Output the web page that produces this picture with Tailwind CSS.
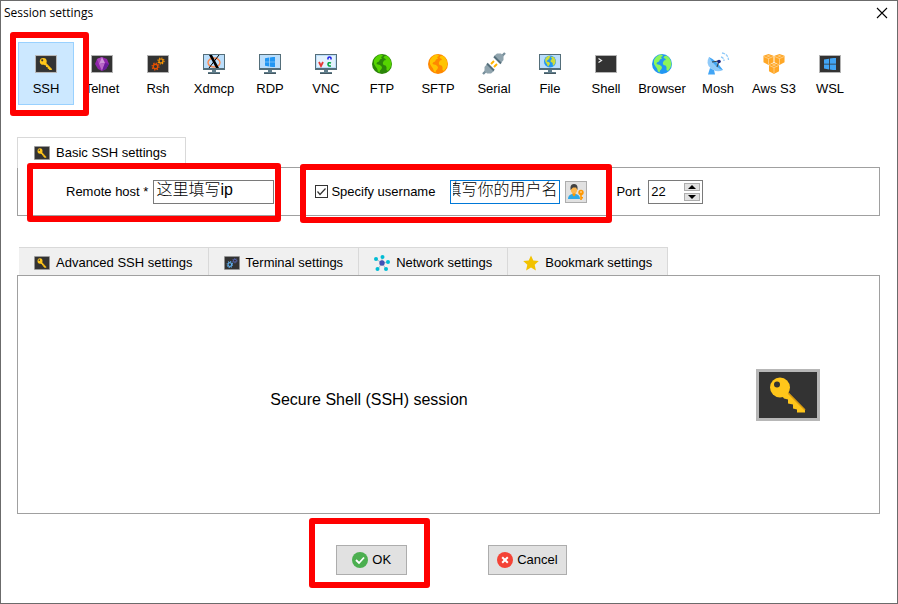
<!DOCTYPE html>
<html lang="en">
<head>
    <meta charset="UTF-8">
    <meta name="viewport" content="width=device-width, initial-scale=1.0">
    <title>Session settings</title>
    <script src="https://cdn.jsdelivr.net/npm/@tailwindcss/browser@4"></script>
</head>
<body class="bg-white text-black text-[13px] leading-4 font-['Liberation_Sans','Noto_Sans_CJK_SC',sans-serif]">

    <!-- Shared icon parts -->
    <svg class="hidden" aria-hidden="true">
        <symbol id="tile" viewBox="0 0 22 18">
            <rect width="22" height="18" fill="#b4b4b4"/>
            <rect x="1" y="1" width="20" height="16" fill="#333"/>
        </symbol>
        <symbol id="key" viewBox="0 0 64 52">
            <rect width="64" height="52" fill="#b7b7b7"/>
            <rect x="3" y="3" width="58" height="46" fill="#333"/>
            <path d="M31 22l18 18.500v3h-8v-3l-4-1v-4l-5-1v-4l-4-1-3-4z" fill="#ffc61a"/>
            <path d="M32 24l17 17" stroke="#d99a10" stroke-width="1.500"/>
            <circle cx="24" cy="18.500" r="10" fill="#ffc61a"/>
            <circle cx="21" cy="15.500" r="3" fill="#333"/>
        </symbol>
        <symbol id="monitor" viewBox="0 0 22 20">
            <rect width="22" height="16" fill="#546e7a"/>
            <rect x="1" y="1" width="20" height="13" fill="#bbdefb"/>
            <path d="M9 16h4v2h4v2H5v-2h4z" fill="#607d8b"/>
            <path d="M5 19h12v1H5z" fill="#455a64"/>
        </symbol>
        <symbol id="land" viewBox="0 0 20 20">
            <path d="M2 6l2-3 3-2 3-.5 1 1.500-2 1 1 1.500-2 1-1 2-2 1-.5 1.500 1.500.5 2 .5 2 2-.5 2-1.500 1.500-.5 2-1.500-1-1-3-1.500-2L2 10z" fill="currentColor"/>
            <path d="M14 1.500l2.500 1.500 2 3 1 4-1 3.500-2.500 3.500-1.500-1v-3l-1-1.500-2-.5-.8-2 1.300-2.500 2-.5-1-1.500-1.500-.5.5-1.500z" fill="currentColor"/>
        </symbol>
        <symbol id="gear" viewBox="0 0 12 12">
            <circle cx="6" cy="6" r="3" fill="none" stroke="currentColor" stroke-width="1.800"/>
            <circle cx="6" cy="6" r="4.600" fill="none" stroke="currentColor" stroke-width="1.600" stroke-dasharray="1.800 1.812"/>
        </symbol>
        <symbol id="windows" viewBox="0 0 12 12">
            <path d="M0 1.500l5-.8v5H0zM5.800.5L12-.3v6H5.800zM0 6.400h5v5L0 10.600zM5.800 6.400H12v6l-6.200-.8z" fill="currentColor"/>
        </symbol>
        <symbol id="cube" viewBox="0 0 12 12">
            <path d="M6 0l5.500 2v7L6 12 .5 9V2z" fill="#ffa726"/>
            <path d="M6 1.200l2.500 1L6 3.200l-2.500-1z" fill="#ffcc80"/>
            <path d="M1 2.800L6 5l5-2.200M6 5v6.500" stroke="#ffe0b2" stroke-width=".7" fill="none"/>
        </symbol>
    </svg>

    <div class="min-h-screen flex flex-col border border-[#6b6b6b]">

        <header class="h-6 flex items-center justify-between pl-[3px] pr-[9px]">
            <h1 class="text-xs font-['Open_Sans',sans-serif]">Session settings</h1>
            <button type="button" aria-label="Close">
                <svg class="w-3 h-3" viewBox="0 0 12 12" fill="none" stroke="#000" stroke-width="1.100"><path d="M1 1l10 10M11 1L1 11"/></svg>
            </button>
        </header>

        <main class="flex-1 flex flex-col pl-4 pr-[17px] pb-7">

            <!-- Session types -->
            <nav class="mt-[17px] pl-px flex">
                <div class="relative">
                    <button type="button" class="w-14 h-[63px] pt-1 flex flex-col items-center justify-center gap-2 bg-[#cce8ff] border border-[#99d1ff]">
                        <svg class="w-[22px] h-[18px]" viewBox="0 0 64 52" preserveAspectRatio="none"><use href="#key" width="64" height="52"/></svg>
                        SSH
                    </button>
                    <span class="absolute z-10 -left-2 -right-[15px] -top-[10px] -bottom-[11px] border-6 border-[#ff0000] rounded-[3px] pointer-events-none"></span>
                </div>
                <button type="button" class="w-14 h-[63px] pt-1 flex flex-col items-center justify-center gap-[7px]">
                    <svg class="w-[22px] h-5" viewBox="0 -1 22 20">
                        <use href="#tile" width="22" height="18"/>
                        <path d="M11 2l5 2 2 5-3 5-4 2-4-2-3-5 2-5z" fill="#8e24aa"/>
                        <path d="M11 2L6 4l2 5z" fill="#ab47bc"/>
                        <path d="M11 2L8 9l6-1z" fill="#ce93d8"/>
                        <path d="M8 9l6-1-3 8z" fill="#ba68c8"/>
                        <path d="M18 9l-4-1-3 8 4-2z" fill="#6a1b9a"/>
                    </svg>
                    Telnet
                </button>
                <button type="button" class="w-14 h-[63px] pt-1 flex flex-col items-center justify-center gap-[7px]">
                    <svg class="w-[22px] h-5" viewBox="0 -1 22 20">
                        <use href="#tile" width="22" height="18"/>
                        <use href="#gear" x="4" y="7" width="9" height="9" class="text-[#e65100]"/>
                        <use href="#gear" x="10" y="2" width="8" height="8" class="text-[#ff9800]"/>
                    </svg>
                    Rsh
                </button>
                <button type="button" class="w-14 h-[63px] pt-1 flex flex-col items-center justify-center gap-[7px]">
                    <svg class="w-[22px] h-5" viewBox="0 0 22 20">
                        <use href="#monitor" width="22" height="20"/>
                        <ellipse cx="11" cy="8.500" rx="6" ry="4.500" fill="none" stroke="#ff8a50" stroke-width="1.400"/>
                        <path d="M6 1h3l7 13h-3z" fill="#000"/>
                        <path d="M16 1L6 14" stroke="#000" stroke-width="1"/>
                    </svg>
                    Xdmcp
                </button>
                <button type="button" class="w-14 h-[63px] pt-1 flex flex-col items-center justify-center gap-[7px]">
                    <svg class="w-[22px] h-5" viewBox="0 0 22 20">
                        <use href="#monitor" width="22" height="20"/>
                        <use href="#windows" x="6" y="3" width="10" height="10" class="text-[#2196f3]"/>
                    </svg>
                    RDP
                </button>
                <button type="button" class="w-14 h-[63px] pt-1 flex flex-col items-center justify-center gap-[7px]">
                    <svg class="w-[22px] h-5" viewBox="0 0 22 20">
                        <use href="#monitor" width="22" height="20"/>
                        <rect x="2" y="2" width="18" height="11" fill="#e3f2fd"/>
                        <path d="M4 8l2 4 2-4" fill="none" stroke="#e53935" stroke-width="1.800"/>
                        <path d="M13 5.500V4q0-1 1.500-1T16 4v1.500" fill="none" stroke="#1a1ae6" stroke-width="1.500"/>
                        <path d="M16 9q-3-1-3 1.200T16 12" fill="none" stroke="#00a63c" stroke-width="1.600"/>
                    </svg>
                    VNC
                </button>
                <button type="button" class="w-14 h-[63px] pt-1 flex flex-col items-center justify-center gap-[7px]">
                    <svg class="w-5 h-5" viewBox="0 0 20 20">
                        <circle cx="10" cy="10" r="10" fill="#2b8509"/>
                        <use href="#land" width="20" height="20" class="text-[#55d400]"/>
                    </svg>
                    FTP
                </button>
                <button type="button" class="w-14 h-[63px] pt-1 flex flex-col items-center justify-center gap-[7px]">
                    <svg class="w-5 h-5" viewBox="0 0 20 20">
                        <circle cx="10" cy="10" r="10" fill="#ff8800"/>
                        <use href="#land" width="20" height="20" class="text-[#ffc400]"/>
                    </svg>
                    SFTP
                </button>
                <button type="button" class="w-14 h-[63px] pt-1 flex flex-col items-center justify-center gap-[7px]">
                    <svg class="w-[22px] h-5 overflow-visible" viewBox="0 0 22 20">
                        <path d="M0 20l3-3M22-1l-3 3" stroke="#78909c" stroke-width="2.400"/>
                        <path d="M8 10l3-3M11 13l3-3" stroke="#ffb300" stroke-width="2"/>
                        <path d="M4 10l7 7-3 2.500H4L1.500 17v-4z" fill="#90a4ae"/>
                        <path d="M11 2l7 7 2.500-3V2L18-.5h-4z" fill="#90a4ae"/>
                        <path d="M4 9.500l7 7M11 2.500l7 7" stroke="#546e7a" stroke-width="2"/>
                    </svg>
                    Serial
                </button>
                <button type="button" class="w-14 h-[63px] pt-1 flex flex-col items-center justify-center gap-[7px]">
                    <svg class="w-[22px] h-5" viewBox="0 0 22 20">
                        <use href="#monitor" width="22" height="20"/>
                        <circle cx="11" cy="7.500" r="6" fill="#2196f3"/>
                        <use href="#land" x="5" y="1.500" width="12" height="12" class="text-[#cddc39]"/>
                    </svg>
                    File
                </button>
                <button type="button" class="w-14 h-[63px] pt-1 flex flex-col items-center justify-center gap-[7px]">
                    <svg class="w-[22px] h-5" viewBox="0 -1 22 20">
                        <use href="#tile" width="22" height="18"/>
                        <path d="M3.500 3.500l3 2-3 2" fill="none" stroke="#eee" stroke-width="1.200"/>
                    </svg>
                    Shell
                </button>
                <button type="button" class="w-14 h-[63px] pt-1 flex flex-col items-center justify-center gap-[7px]">
                    <svg class="w-5 h-5" viewBox="0 0 20 20">
                        <circle cx="10" cy="10" r="10" fill="#2196f3"/>
                        <use href="#land" width="20" height="20" class="text-[#8cf55a]"/>
                    </svg>
                    Browser
                </button>
                <button type="button" class="w-14 h-[63px] pt-1 flex flex-col items-center justify-center gap-[7px]">
                    <svg class="w-[22px] h-5 overflow-visible" viewBox="0 0 22 20">
                        <path d="M3 14l4 2 1 4.500H1z" fill="#42a5f5"/>
                        <path d="M2 3Q-2 10 4 14.500T16 16z" fill="#90caf9"/>
                        <path d="M2 3q7 3 14 13-3-.5-7-4T2 3z" fill="#42a5f5"/>
                        <path d="M5 8l7-1-2 6" fill="none" stroke="#37474f" stroke-width="1.100"/>
                        <circle cx="12" cy="7.500" r="1.800" fill="#1a237e"/>
                        <path d="M14 3q3 .5 3 4M15-1q6 1 6.500 7" fill="none" stroke="#90caf9" stroke-width="1.300" stroke-dasharray="3 1"/>
                    </svg>
                    Mosh
                </button>
                <button type="button" class="w-14 h-[63px] pt-1 flex flex-col items-center justify-center gap-[7px]">
                    <svg class="w-[22px] h-5" viewBox="0 0 22 20">
                        <use href="#cube" width="11" height="11"/>
                        <use href="#cube" x="11" width="11" height="11"/>
                        <use href="#cube" x="5.500" y="9" width="11" height="11"/>
                    </svg>
                    <span class="whitespace-nowrap">Aws S3</span>
                </button>
                <button type="button" class="w-14 h-[63px] pt-1 flex flex-col items-center justify-center gap-[7px]">
                    <svg class="w-[22px] h-5" viewBox="0 -1 22 20">
                        <use href="#tile" width="22" height="18"/>
                        <use href="#windows" x="5" y="3" width="12" height="12" class="text-[#42a5f5]"/>
                    </svg>
                    WSL
                </button>
            </nav>

            <!-- Basic settings -->
            <div class="mt-8 flex" role="tablist">
                <button type="button" role="tab" aria-selected="true" class="relative h-[31px] -mb-px pl-4 pr-[18px] flex items-center gap-1.5 bg-white border border-b-0 border-[#d9d9d9]">
                    <svg class="w-4 h-[14px]" viewBox="0 0 64 52" preserveAspectRatio="none"><use href="#key" width="64" height="52"/></svg>
                    Basic SSH settings
                </button>
            </div>
            <form class="h-[49px] pl-12 flex items-center border border-[#a0a0a0]">
                <div class="relative flex items-center gap-[5px]">
                    <label for="host" class="whitespace-nowrap">Remote host *</label>
                    <input id="host" type="text" value="这里填写ip" class="w-[121px] h-6 px-0.5 pb-1 text-base font-light border border-[#7a7a7a] outline-none">
                    <span class="absolute z-10 -left-[39px] -right-[7px] -top-[17px] -bottom-[18px] border-6 border-[#ff0000] rounded-[3px] pointer-events-none"></span>
                </div>
                <div class="relative ml-[41px] flex items-center">
                    <span class="grid">
                        <input id="specify" type="checkbox" checked class="peer col-start-1 row-start-1 w-[13px] h-[13px] appearance-none border border-[#333] bg-white">
                        <svg class="col-start-1 row-start-1 w-[13px] h-[13px] invisible peer-checked:visible pointer-events-none" viewBox="0 0 13 13" fill="none" stroke="#333" stroke-width="1.200"><path d="M2.500 6.500L5 9.500l5.500-6"/></svg>
                    </span>
                    <label for="specify" class="ml-[3px] whitespace-nowrap">Specify username</label>
                    <!-- rtl keeps the end of a long name in view -->
                    <input id="username" type="text" dir="rtl" aria-label="Username" value="这里填写你的用户名" class="ml-[15px] w-[110px] h-6 px-0.5 pb-1 text-base font-light border border-[#0078d7] outline-none">
                    <button type="button" aria-label="Choose user" class="ml-[5px] w-[22px] h-[22px] flex items-center justify-center bg-[#e1e1e1] border border-[#adadad]">
                        <svg class="w-4 h-4" viewBox="0 0 16 16">
                            <path d="M0 15q0-4 4-5h4q4 1 4 5z" fill="#2fa8e6"/>
                            <path d="M4.500 9h3v2L6 12.500 4.500 11z" fill="#ff9800"/>
                            <ellipse cx="6" cy="5.500" rx="3.200" ry="4" fill="#ffb74d"/>
                            <path d="M2.500 6V3Q3 0 6 0t3.500 3v3L8 3.500H5z" fill="#424242"/>
                            <circle cx="13" cy="8.500" r="2.700" fill="#ff9800"/>
                            <path d="M12.200 10h1.600v6h-1.600zM13.500 13h1.500v1.500h-1.500z" fill="#ff9800"/>
                            <circle cx="13" cy="8" r=".7" fill="#fff"/>
                        </svg>
                    </button>
                    <span class="absolute z-10 -left-[15px] -right-[25px] -top-4 -bottom-[19px] border-6 border-[#ff0000] rounded-[3px] pointer-events-none"></span>
                </div>
                <label for="port" class="ml-[29px]">Port</label>
                <div class="ml-2 w-[55px] h-6 pl-0.5 pr-0.5 flex items-center border border-[#7a7a7a]">
                    <input id="port" type="number" value="22" class="min-w-0 flex-1 outline-none [appearance:textfield] [&::-webkit-inner-spin-button]:appearance-none">
                    <div class="flex flex-col gap-0.5">
                        <button type="button" aria-label="Increase port" data-step="1" class="w-4 h-2 flex items-center justify-center bg-[#e1e1e1] border border-[#adadad]">
                            <svg class="w-2 h-1" viewBox="0 0 8 4"><path d="M0 4l4-4 4 4z"/></svg>
                        </button>
                        <button type="button" aria-label="Decrease port" data-step="-1" class="w-4 h-2 flex items-center justify-center bg-[#e1e1e1] border border-[#adadad]">
                            <svg class="w-2 h-1" viewBox="0 0 8 4"><path d="M0 0l4 4 4-4z"/></svg>
                        </button>
                    </div>
                </div>
            </form>

            <!-- Other settings -->
            <div class="mt-[31px] pl-0.5 flex" role="tablist">
                <button type="button" role="tab" class="h-7 pt-0.5 px-[15px] flex items-center gap-1.5 bg-[#f0f0f0] border-t border-r border-[#d9d9d9]">
                    <svg class="w-4 h-[14px]" viewBox="0 0 64 52" preserveAspectRatio="none"><use href="#key" width="64" height="52"/></svg>
                    Advanced SSH settings
                </button>
                <button type="button" role="tab" class="h-7 pt-0.5 px-[15px] flex items-center gap-1.5 bg-[#f0f0f0] border-t border-r border-[#d9d9d9]">
                    <svg class="w-4 h-[14px]" viewBox="0 0 22 18" preserveAspectRatio="none">
                        <use href="#tile" width="22" height="18"/>
                        <use href="#gear" x="3" y="6" width="10" height="10" class="text-[#64b5f6]"/>
                        <use href="#gear" x="11" y="2" width="8" height="8" class="text-[#5c6bc0]"/>
                    </svg>
                    Terminal settings
                </button>
                <button type="button" role="tab" class="h-7 pt-0.5 px-[15px] flex items-center gap-1.5 bg-[#f0f0f0] border-t border-r border-[#d9d9d9]">
                    <svg class="w-4 h-4" viewBox="0 0 16 16">
                        <path d="M8 8L2 4M8 8l0-6M8 8l6-1M8 8l4 6M8 8l-4 6" stroke="#b0bec5" stroke-width="1"/>
                        <circle cx="8" cy="8" r="2.700" fill="#3f51b5"/>
                        <g fill="#00bcd4">
                            <circle cx="2" cy="4" r="2"/><circle cx="8.500" cy="2" r="2"/><circle cx="14" cy="7" r="2"/><circle cx="12" cy="14" r="2"/><circle cx="3.500" cy="14" r="2"/>
                        </g>
                    </svg>
                    Network settings
                </button>
                <button type="button" role="tab" class="h-7 pt-0.5 px-[15px] flex items-center gap-1.5 bg-[#f0f0f0] border-t border-r border-[#d9d9d9]">
                    <svg class="w-4 h-4" viewBox="0 0 16 16"><path d="M8 .5l2.300 5 5.500.6-4.100 3.700 1.200 5.700L8 12.600l-4.900 2.900 1.200-5.700L.2 6.100l5.500-.6z" fill="#f2c200"/></svg>
                    Bookmark settings
                </button>
            </div>
            <section class="flex-1 flex items-center pr-[23px] border border-[#a0a0a0]">
                <p class="flex-1 pt-2.5 text-center text-base">Secure Shell (SSH) session</p>
                <div class="w-[136px] flex justify-center">
                    <svg class="w-16 h-[52px]" viewBox="0 0 64 52"><use href="#key" width="64" height="52"/></svg>
                </div>
            </section>

            <footer class="mt-[31px] pl-1.5 flex justify-center gap-[81px]">
                <div class="relative">
                    <button type="button" class="h-[30px] px-[15px] flex items-center gap-1 bg-[#e1e1e1] border border-[#adadad]">
                        <svg class="w-4 h-4" viewBox="0 0 16 16"><circle cx="8" cy="8" r="8" fill="#4caf50"/><path d="M4 8l3 3 5-5.500" fill="none" stroke="#fff" stroke-width="1.800"/></svg>
                        OK
                    </button>
                    <span class="absolute z-10 -left-[27px] -right-[23px] -top-[27px] -bottom-[13px] border-6 border-[#ff0000] rounded-[3px] pointer-events-none"></span>
                </div>
                <button type="button" class="h-[30px] px-2 flex items-center gap-1 bg-[#e1e1e1] border border-[#adadad]">
                    <svg class="w-4 h-4" viewBox="0 0 16 16"><circle cx="8" cy="8" r="8" fill="#f44336"/><path d="M5.200 5.200l5.600 5.600M10.800 5.200l-5.600 5.600" stroke="#fff" stroke-width="2"/></svg>
                    Cancel
                </button>
            </footer>
        </main>
    </div>

    <script>
        const port = document.getElementById('port');
        document.querySelectorAll('[data-step]').forEach(btn => {
            btn.addEventListener('click', () => {
                port.value = Number(port.value) + Number(btn.dataset.step);
            });
        });
    </script>
</body>
</html>
